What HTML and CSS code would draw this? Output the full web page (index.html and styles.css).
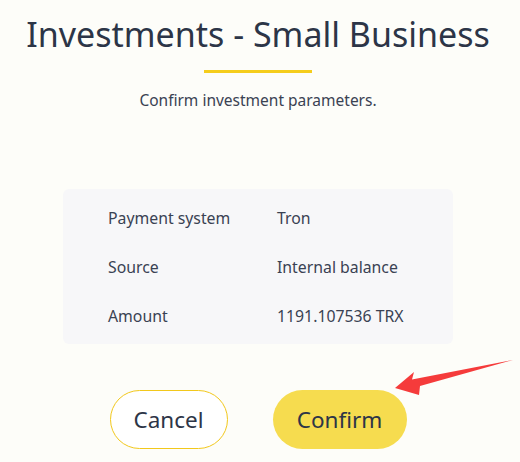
FILE: index.html
```html
<!DOCTYPE html>
<html lang="en">
<head>
    <meta charset="UTF-8">
    <meta name="viewport" content="width=device-width, initial-scale=1.0">
    <title>Investments - Small Business</title>
    <link rel="stylesheet" href="styles.css">
</head>
<body>
    <div class="container">
        <h1 class="title">Investments - Small Business</h1>
        <div class="title-line"></div>
        <p class="subtitle">Confirm investment parameters.</p>

        <div class="params">
            <div class="param-row">
                <span class="param-label">Payment system</span>
                <span class="param-value">Tron</span>
            </div>
            <div class="param-row">
                <span class="param-label">Source</span>
                <span class="param-value">Internal balance</span>
            </div>
            <div class="param-row">
                <span class="param-label">Amount</span>
                <span class="param-value">1191.107536 TRX</span>
            </div>
        </div>

        <div class="actions">
            <button class="btn btn-cancel">Cancel</button>
            <button class="btn btn-confirm">Confirm</button>
            <!-- annotation arrow -->
            <svg class="arrow" width="130" height="45" viewBox="385 355 130 45">
                <polygon points="395,388 414,372 412,379.5 513,360 420,386 419,395" fill="#f53b3b"/>
            </svg>
        </div>
    </div>
</body>
</html>
```

FILE: styles.css
```css
body {
    font-family: "Noto Sans", "Open Sans", sans-serif;
    margin: 0;
    padding: 0;
    background-color: #fdfdf9;
    color: #2d3547;
}
.container {
    width: 516px;
    text-align: center;
}
.title {
    margin: 0;
    padding-top: 11px;
    font-size: 34px;
    font-weight: 400;
    line-height: 46px;
    color: #2c3547;
}
.title-line {
    width: 108px;
    height: 3px;
    margin: 13px auto 0;
    background-color: #f5cd1c;
}
.subtitle {
    margin: 17px 0 0;
    font-size: 15.5px;
    line-height: 20px;
    color: #3a4253;
}
.params {
    width: 390px;
    margin: 79px auto 0;
    padding: 4px 0;
    background-color: #f7f7f9;
    border-radius: 6px;
    text-align: left;
}
.param-row {
    display: flex;
    height: 49px;
    align-items: center;
    font-size: 15.8px;
    color: #3a4253;
}
.param-label {
    width: 169px;
    padding-left: 45px;
}
.actions {
    position: relative;
    display: flex;
    justify-content: center;
    gap: 45px;
    margin-top: 46px;
}
.btn {
    height: 59px;
    border-radius: 30px;
    font-family: inherit;
    font-size: 22.5px;
    color: #2d3547;
    cursor: pointer;
}
.btn-cancel {
    width: 118px;
    background-color: #fff;
    border: 1px solid #f2c81c;
}
.btn-confirm {
    width: 134px;
    background-color: #f6dc4f;
    border: none;
}
.arrow {
    position: absolute;
    left: 385px;
    top: -35px;
}
```
